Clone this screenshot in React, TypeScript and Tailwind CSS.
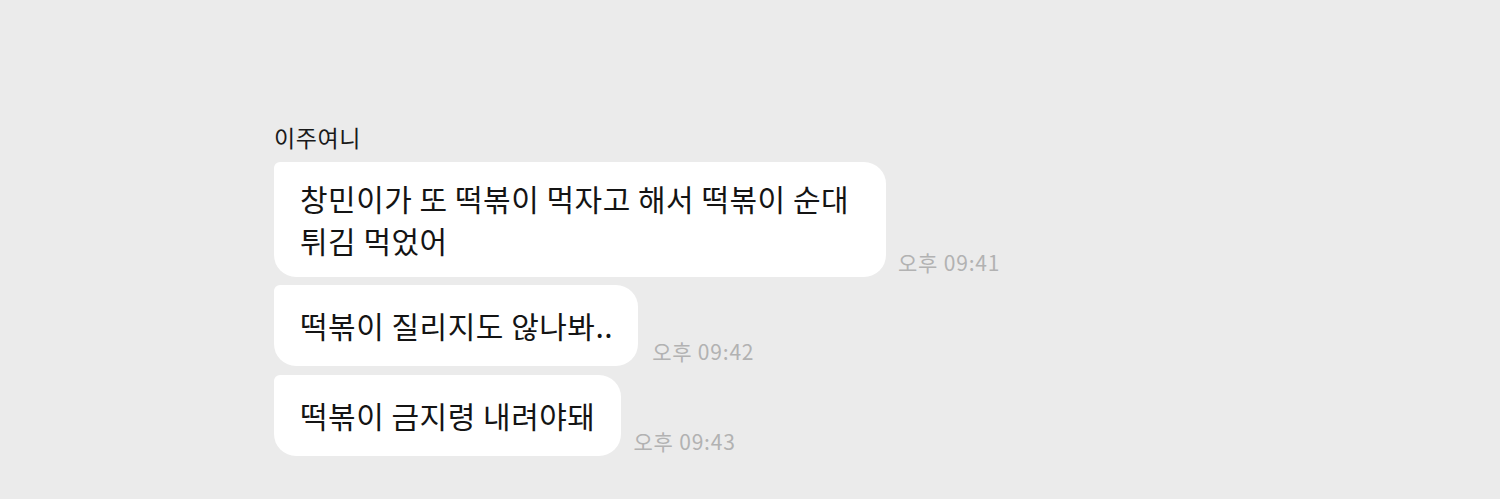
import React from "react";

const font = { fontFamily: '"Noto Sans CJK KR", "Noto Sans", sans-serif' };

function Row({
  children,
  time,
  bubbleClass,
  gapClass,
}: {
  children: React.ReactNode;
  time: string;
  bubbleClass: string;
  gapClass: string;
}) {
  return (
    <div className={`flex items-end ${gapClass}`}>
      <div
        className={`bg-white text-[#141414] text-[30px] tracking-[0.5px] leading-[42px] rounded-[22px] rounded-tl-[6px] pl-[26px] ${bubbleClass}`}
      >
        {children}
      </div>
      <div className="text-[21px] tracking-[0.8px] leading-[24px] text-[#b2b2b2] whitespace-nowrap mb-[3px]">
        {time}
      </div>
    </div>
  );
}

export default function App() {
  return (
    <div
      className="w-[1500px] h-[499px] bg-[#ebebeb] pl-[274px] pt-[122px] flex flex-col"
      style={font}
    >
      <div className="text-[23px] tracking-[0.6px] leading-[30px] text-[#1a1a1a] mb-[10px]">이주여니</div>
      <Row time="오후 09:41" bubbleClass="pt-[15px] pb-[16px] pr-[24px] w-[612px]" gapClass="gap-[12px]">
        창민이가 또 떡볶이 먹자고 해서 떡볶이 순대
        <br />
        튀김 먹었어
      </Row>
      <div className="h-[8px]" />
      <Row time="오후 09:42" bubbleClass="pt-[19px] pb-[20px] pr-[25px]" gapClass="gap-[14px]">
        떡볶이 질리지도 않나봐..
      </Row>
      <div className="h-[9px]" />
      <Row time="오후 09:43" bubbleClass="pt-[19px] pb-[20px] pr-[26px]" gapClass="gap-[12px]">
        떡볶이 금지령 내려야돼
      </Row>
    </div>
  );
}
